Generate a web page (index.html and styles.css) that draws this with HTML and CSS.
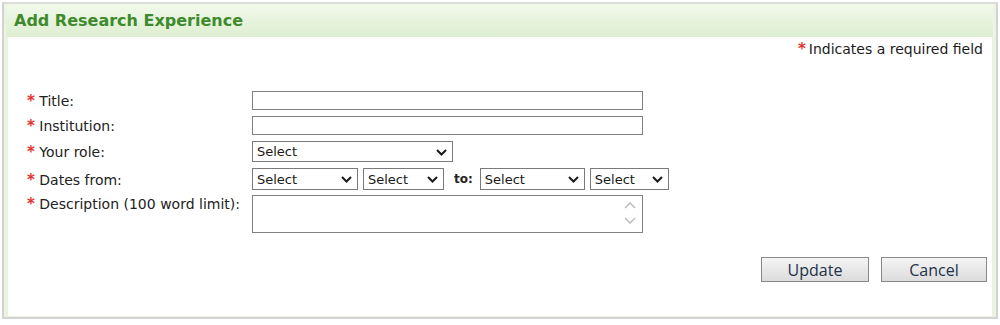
FILE: index.html
```html
<!DOCTYPE html>
<html lang="en">
<head>
    <meta charset="UTF-8">
    <meta name="viewport" content="width=device-width, initial-scale=1.0">
    <title>Add Research Experience</title>
    <link rel="stylesheet" href="styles.css">
</head>
<body>

<div class="panel">
    <div class="panel-head">Add Research Experience</div>
    <div class="panel-body">
        <p class="req-note"><span class="req">*</span>Indicates a required field</p>

        <form class="exp-form" id="researchForm">
            <div class="row">
                <label for="res_title"><span class="req">*</span> Title:</label>
                <input type="text" id="res_title" class="txt">
            </div>
            <div class="row">
                <label for="res_inst"><span class="req">*</span> Institution:</label>
                <input type="text" id="res_inst" class="txt">
            </div>
            <div class="row row-role">
                <label for="res_role"><span class="req">*</span> Your role:</label>
                <span class="sel sel-role">
                    <select id="res_role"><option>Select</option></select>
                    <svg class="chev" viewBox="0 0 11 7"><path d="M1 1 L5.5 5.5 L10 1"/></svg>
                </span>
            </div>
            <div class="row row-dates">
                <label for="from_month"><span class="req">*</span> Dates from:</label>
                <div class="dates">
                    <span class="sel sel-month">
                        <select id="from_month"><option>Select</option></select>
                        <svg class="chev" viewBox="0 0 11 7"><path d="M1 1 L5.5 5.5 L10 1"/></svg>
                    </span>
                    <span class="sel sel-year">
                        <select id="from_year"><option>Select</option></select>
                        <svg class="chev" viewBox="0 0 11 7"><path d="M1 1 L5.5 5.5 L10 1"/></svg>
                    </span>
                    <span class="to">to:</span>
                    <span class="sel sel-month2">
                        <select id="to_month"><option>Select</option></select>
                        <svg class="chev" viewBox="0 0 11 7"><path d="M1 1 L5.5 5.5 L10 1"/></svg>
                    </span>
                    <span class="sel sel-year2">
                        <select id="to_year"><option>Select</option></select>
                        <svg class="chev" viewBox="0 0 11 7"><path d="M1 1 L5.5 5.5 L10 1"/></svg>
                    </span>
                </div>
            </div>
            <div class="row row-desc">
                <label for="res_desc"><span class="req">*</span> Description (100 word limit):</label>
                <span class="ta-wrap">
                    <textarea id="res_desc"></textarea>
                    <svg class="ta-arrows" viewBox="0 0 12 24"><path d="M1 7 L6 2 L11 7"/><path d="M1 17 L6 22 L11 17"/></svg>
                </span>
            </div>
        </form>

        <div class="actions">
            <button type="button" class="btn btn-update">Update</button>
            <button type="button" class="btn btn-cancel">Cancel</button>
        </div>
    </div>
</div>

</body>
</html>
```

FILE: styles.css
```css
body {
    font-family: "DejaVu Sans", Verdana, sans-serif;
    font-size: 14px;
    color: #222;
    background-color: #fff;
    margin: 0;
    padding: 2px;
}

.panel {
    border: 2px solid #d3d3d3;
    border-top-color: #dcdcdc;
    background-color: #e9f3df;
    padding: 0 4px 5px 4px;
    height: 317px;
    box-sizing: border-box;
}

.panel-head {
    height: 33px;
    line-height: 32px;
    padding-left: 8px;
    font-size: 16px;
    font-weight: bold;
    color: #3e8a2c;
    background: linear-gradient(#f1f9eb, #ddeed0);
    border: 1px solid #eef7e6;
    border-bottom: none;
    box-sizing: border-box;
    margin: 0 -2px 0 -3px;
}

.panel-body {
    background-color: #fff;
    height: 279px;
    box-sizing: border-box;
    padding-top: 4px;
}

.req-note {
    margin: 0;
    text-align: right;
    padding-right: 9px;
    line-height: 16px;
    font-size: 14px;
    color: #1c1c1c;
}

.req-note .req {
    margin-right: 3px;
}

.req {
    color: #e5322b;
    font-size: 15px;
    font-weight: bold;
}

.exp-form {
    margin: 34px 0 0 0;
    padding-left: 19px;
    display: flex;
    flex-direction: column;
}

.row {
    display: flex;
    align-items: center;
    margin-bottom: 6px;
}

.row label {
    width: 225px;
    flex-shrink: 0;
    line-height: 17px;
    color: #222;
    padding-top: 2px;
}

.row-role {
    margin-bottom: 6px;
}

.row-dates {
    margin-bottom: 5px;
}

.row-desc {
    align-items: flex-start;
}

.row-desc label {
    padding-top: 1px;
}

.txt {
    width: 391px;
    height: 19px;
    border: 1px solid #808080;
    box-sizing: border-box;
    padding: 0 3px;
    margin: 0;
    font-family: "DejaVu Sans", sans-serif;
    font-size: 12px;
}

.sel {
    position: relative;
    display: inline-block;
    height: 22px;
}

.sel select {
    appearance: none;
    -webkit-appearance: none;
    width: 100%;
    height: 100%;
    margin: 0;
    border: 1px solid #7a7a7a;
    border-radius: 0;
    background: #fff;
    padding: 0 0 0 4px;
    font-family: "DejaVu Sans", sans-serif;
    font-size: 13px;
    color: #1a1a1a;
    box-sizing: border-box;
}

.chev {
    position: absolute;
    right: 6px;
    top: 50%;
    margin-top: -3px;
    width: 11px;
    height: 7px;
    pointer-events: none;
}

.chev path {
    fill: none;
    stroke: #1a1a1a;
    stroke-width: 2;
}

.sel-role {
    width: 201px;
    height: 21px;
}

.dates {
    display: flex;
    align-items: center;
}

.sel-month {
    width: 106px;
}

.sel-year {
    width: 81px;
    margin-left: 5px;
}

.sel-month2 {
    width: 105px;
}

.sel-year2 {
    width: 79px;
    margin-left: 5px;
}

.to {
    font-weight: bold;
    font-size: 12px;
    margin: 0 7px 0 10px;
}

.ta-wrap {
    position: relative;
    display: inline-block;
    width: 391px;
    height: 38px;
}

.ta-wrap textarea {
    width: 100%;
    height: 100%;
    margin: 0;
    border: 1px solid #808080;
    box-sizing: border-box;
    resize: none;
    display: block;
}

.ta-arrows {
    position: absolute;
    right: 7px;
    top: 6px;
    width: 12px;
    height: 24px;
    pointer-events: none;
}

.ta-arrows path {
    fill: none;
    stroke: #b5b5b5;
    stroke-width: 1.3;
}

.actions {
    display: flex;
    justify-content: flex-end;
    gap: 12px;
    margin-top: 18px;
    padding-right: 5px;
}

.btn {
    height: 25px;
    border: 1px solid #888;
    background: linear-gradient(#f5f5f5, #dcdcdc);
    font-family: "Open Sans", sans-serif;
    font-size: 16px;
    color: #22324a;
    padding: 0;
    line-height: 22px;
    cursor: pointer;
}

.btn-update {
    width: 108px;
}

.btn-cancel {
    width: 106px;
}
```
